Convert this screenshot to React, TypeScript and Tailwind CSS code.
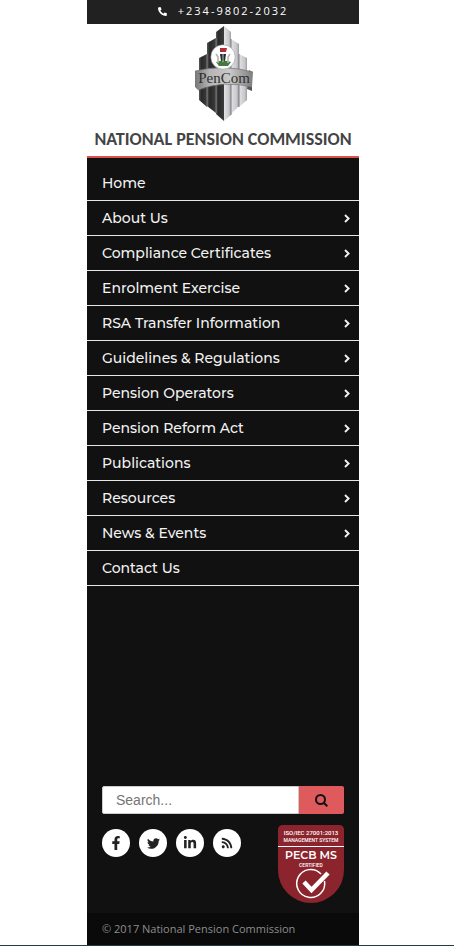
import React from "react";
import { FaFacebookF, FaLinkedinIn, FaPhoneAlt, FaRss, FaTwitter } from "react-icons/fa";

const menu = [
  { label: "Home", sub: false },
  { label: "About Us", sub: true },
  { label: "Compliance Certificates", sub: true },
  { label: "Enrolment Exercise", sub: true },
  { label: "RSA Transfer Information", sub: true },
  { label: "Guidelines & Regulations", sub: true },
  { label: "Pension Operators", sub: true },
  { label: "Pension Reform Act", sub: true },
  { label: "Publications", sub: true },
  { label: "Resources", sub: true },
  { label: "News & Events", sub: true },
  { label: "Contact Us", sub: false },
];

const socials = [
  { label: "Facebook", icon: <FaFacebookF size={14} /> },
  { label: "Twitter", icon: <FaTwitter size={13} /> },
  { label: "LinkedIn", icon: <FaLinkedinIn size={14} /> },
  { label: "RSS", icon: <FaRss size={12} /> },
];

function Chevron() {
  return (
    <svg className="h-[9px] w-[6px]" viewBox="0 0 6 9" fill="none" stroke="#f2f2f2" strokeWidth="1.9" aria-hidden="true">
      <path d="M1 1 L4.6 4.5 L1 8" />
    </svg>
  );
}

function PenComEmblem() {
  return (
    <svg className="h-24 w-[60px]" viewBox="0 0 60 96" role="img" aria-label="PenCom">
      <defs>
        <linearGradient id="dark" x1="0" x2="1">
          <stop offset="0" stopColor="#585858" />
          <stop offset="0.3" stopColor="#292929" />
          <stop offset="1" stopColor="#3c3c3c" />
        </linearGradient>
        <linearGradient id="light" x1="0" x2="1">
          <stop offset="0" stopColor="#e3e3e5" />
          <stop offset="0.7" stopColor="#c8c8cc" />
          <stop offset="1" stopColor="#9d9da1" />
        </linearGradient>
        <linearGradient id="band" x1="0" x2="1">
          <stop offset="0" stopColor="#777" />
          <stop offset="0.25" stopColor="#b5b5b5" />
          <stop offset="0.6" stopColor="#c9c9c9" />
          <stop offset="1" stopColor="#7e7e7e" />
        </linearGradient>
      </defs>
      <path d="M6 32 L14 28 V81 L6 74 Z" fill="url(#dark)" />
      <path d="M14 17 L23 12 V87 L14 80 Z" fill="url(#dark)" />
      <path d="M23 6 L31 0 V95 L23 88 Z" fill="url(#dark)" />
      <path d="M31 0 L38 6 V89 L31 95 Z" fill="url(#light)" />
      <path d="M38 13 L46 18 V80 L38 88 Z" fill="url(#light)" />
      <path d="M46 28 L54 32 V74 L46 81 Z" fill="url(#light)" />
      <path d="M14 28 V81 M23 12 V87" stroke="#8b8b8b" strokeWidth="0.8" />
      <path d="M38 13 V89 M46 28 V81" stroke="#7d7d80" strokeWidth="1" />
      <path d="M56 44 L59 46 V65 L54 63 Z" fill="#555" />
      <path d="M2 45 Q31 38 60 46 L59 61 Q31 54 5 64 L2 61 Z" fill="url(#band)" />
      <path d="M2 45 Q31 38 60 46 M5 64 Q31 54 59 61" fill="none" stroke="#767676" strokeWidth="0.7" />
      <circle cx="30" cy="31" r="12.2" fill="#fff" stroke="#8a8a8a" strokeWidth="0.5" />
      <path d="M27 22 H34 L33 26 H27 Z" fill="#b52a38" />
      <path d="M27 28 H33 L32 35 L30 37 L28 35 Z" fill="#222c2c" />
      <path d="M23 36 Q30 33 38 36 L35 40 H26 Z" fill="#437b3c" />
      <path d="M25 37 V31 L23 28 M35 37 V31 L37 28" fill="none" stroke="#b9b5b1" strokeWidth="1.6" />
      <path d="M30 28 V36" stroke="#e8e8e8" strokeWidth="0.8" />
      <text x="31" y="57" textAnchor="middle" fontSize="15" fill="#303030" fontFamily="'Liberation Serif', serif">
        PenCom
      </text>
    </svg>
  );
}

function CertificateBadge() {
  return (
    <svg
      className="h-[78px] w-[66px]"
      viewBox="0 0 66 78"
      role="img"
      aria-label="ISO/IEC 27001:2013 Management System, PECB MS Certified"
      fontFamily="Roboto, 'Liberation Sans', sans-serif"
      textAnchor="middle"
      fill="#fff"
    >
      <path d="M5 0 H61 Q66 0 66 5 V45 A33 33 0 0 1 0 45 V5 Q0 0 5 0 Z" fill="#8b242d" />
      <text x="33" y="10" fontSize="6" fontWeight="500">ISO/IEC 27001:2013</text>
      <text x="33" y="17" fontSize="5" fontWeight="500">MANAGEMENT SYSTEM</text>
      <rect y="21" width="66" height="1" />
      <text x="33" y="34" fontSize="11" fontWeight="600" fontFamily="Montserrat, Inter, sans-serif">PECB MS</text>
      <text x="33" y="42" fontSize="5" fontWeight="500">CERTIFIED</text>
      <path d="M43 49 A14 14 0 1 0 46.500 56" fill="none" stroke="#fff" strokeWidth="1.5" />
      <path d="M26 57 L33.500 65 L50 48" fill="none" stroke="#fff" strokeWidth="4.500" />
    </svg>
  );
}

export default function App() {
  return (
    <div className="flex min-h-screen flex-col border-b border-[#243c4a] bg-white pl-[87px] pr-[95px] font-['Open_Sans',sans-serif]">
      <div className="flex flex-1 flex-col bg-[#111111]">
        <div className="flex h-6 items-center justify-center gap-[11px] bg-[#212121] pb-[2px] text-white">
          <FaPhoneAlt size={9} />
          <a href="tel:+23498022032" className="text-[11px] font-medium leading-4 tracking-[2px]">+234-9802-2032</a>
        </div>

        <header className="flex h-[134px] flex-col items-center border-b-2 border-[#d9534f] bg-white pt-[2px]">
          <PenComEmblem />
          <h1 className="mt-[5px] whitespace-nowrap font-['Carlito','Lato',sans-serif] text-[18px] font-bold leading-6 text-[#444444]">
            NATIONAL PENSION COMMISSION
          </h1>
        </header>

        <nav aria-label="Main" className="pt-2">
          <ul>
            {menu.map((item) => (
              <li key={item.label} className="border-b border-[#e6e6e6]">
                <a href="#" className="flex h-[34px] items-center justify-between pl-[15px] pr-[9px] font-['Montserrat','Inter',sans-serif] text-[14px] font-medium text-[#f2f2f2]">
                  <span>{item.label}</span>
                  {item.sub && <Chevron />}
                </a>
              </li>
            ))}
          </ul>
        </nav>

        <div className="mt-auto px-[15px] pb-[10px]">
          <form className="flex h-7" role="search" onSubmit={(e) => e.preventDefault()}>
            <input
              type="search"
              aria-label="Search"
              placeholder="Search..."
              className="min-w-0 flex-1 rounded-l-[2px] border border-[#cccccc] bg-white px-[13px] font-['Liberation_Sans',sans-serif] text-[14px] text-[#333333] placeholder:text-[#757575]"
            />
            <button type="submit" aria-label="Search" className="flex w-[45px] items-center justify-center rounded-r-[2px] bg-[#df5a5d] text-[#111111]">
              <svg className="size-[13px]" viewBox="0 0 13 13" fill="none" stroke="currentColor" strokeWidth="2" aria-hidden="true">
                <circle cx="5.500" cy="5.500" r="4.500" />
                <path d="M8.700 8.700 L12.300 12.300" />
              </svg>
            </button>
          </form>
          <div className="mt-[11px] flex items-start justify-between">
            <ul className="flex gap-[9px] pt-1">
              {socials.map((s) => (
                <li key={s.label}>
                  <a href="#" aria-label={s.label} className="flex size-7 items-center justify-center rounded-full bg-white text-[#222222]">
                    {s.icon}
                  </a>
                </li>
              ))}
            </ul>
            <CertificateBadge />
          </div>
        </div>

        <footer className="flex h-8 items-center bg-[#0a0a0a] px-[15px] text-[11px] text-[#8c8c8c]">
          © 2017 National Pension Commission
        </footer>
      </div>
    </div>
  );
}
